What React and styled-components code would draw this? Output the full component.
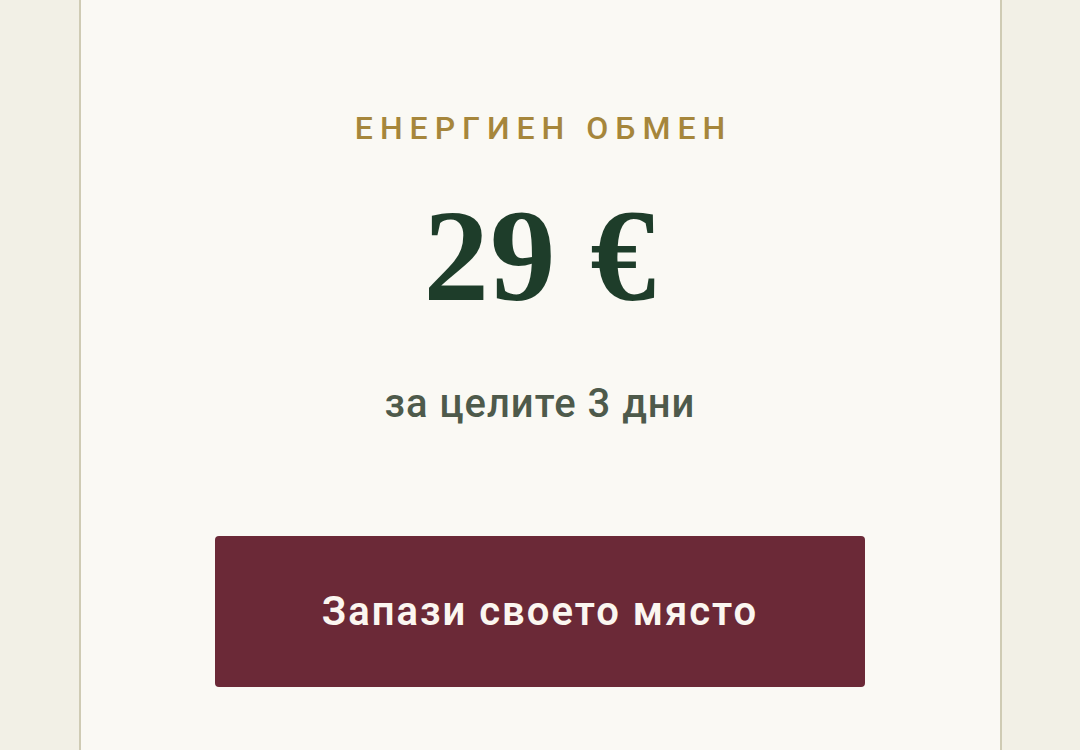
import React from "react";
import styled, { createGlobalStyle } from "styled-components";

const Global = createGlobalStyle`
  html, body { margin: 0; padding: 0; }
  body { background: #f2f0e6; font-family: Roboto, "Noto Sans", sans-serif; }
`;

const Page = styled.div`
  min-height: 750px;
  background: #f2f0e6;
  display: flex;
  justify-content: center;
  overflow: hidden;
`;

const Card = styled.section`
  width: 923px;
  height: 750px;
  box-sizing: border-box;
  background: #faf9f4;
  border-left: 2.5px solid #cfcbb4;
  border-right: 2.5px solid #cfcbb4;
  display: flex;
  flex-direction: column;
  align-items: center;
  padding-top: 110px;
`;

const Label = styled.div`
  font-family: Roboto, sans-serif;
  font-weight: 500;
  font-size: 32px;
  line-height: 36px;
  letter-spacing: 7px;
  margin-right: -7px;
  color: #a6863b;
  text-transform: uppercase;
`;

const Price = styled.div`
  font-family: "Liberation Serif", "Times New Roman", serif;
  font-weight: 700;
  font-size: 131px;
  line-height: 150px;
  letter-spacing: 1px;
  color: #1e3d2a;
  margin-top: 35px;
`;

const Note = styled.div`
  font-family: Roboto, sans-serif;
  font-weight: 500;
  font-size: 40px;
  line-height: 44px;
  letter-spacing: 1px;
  color: #4e5a4b;
  margin-top: 51px;
`;

const Button = styled.button`
  margin-top: 110px;
  width: 650px;
  height: 151px;
  border: none;
  border-radius: 4px;
  background: #6b2937;
  color: #fbf6f0;
  font-family: Roboto, sans-serif;
  font-weight: 600;
  font-size: 40px;
  letter-spacing: 2px;
  cursor: pointer;
`;

export default function App() {
  return (
    <>
      <Global />
      <Page>
        <Card>
          <Label>Енергиен обмен</Label>
          <Price>29 €</Price>
          <Note>за целите 3 дни</Note>
          <Button>Запази своето място</Button>
        </Card>
      </Page>
    </>
  );
}
